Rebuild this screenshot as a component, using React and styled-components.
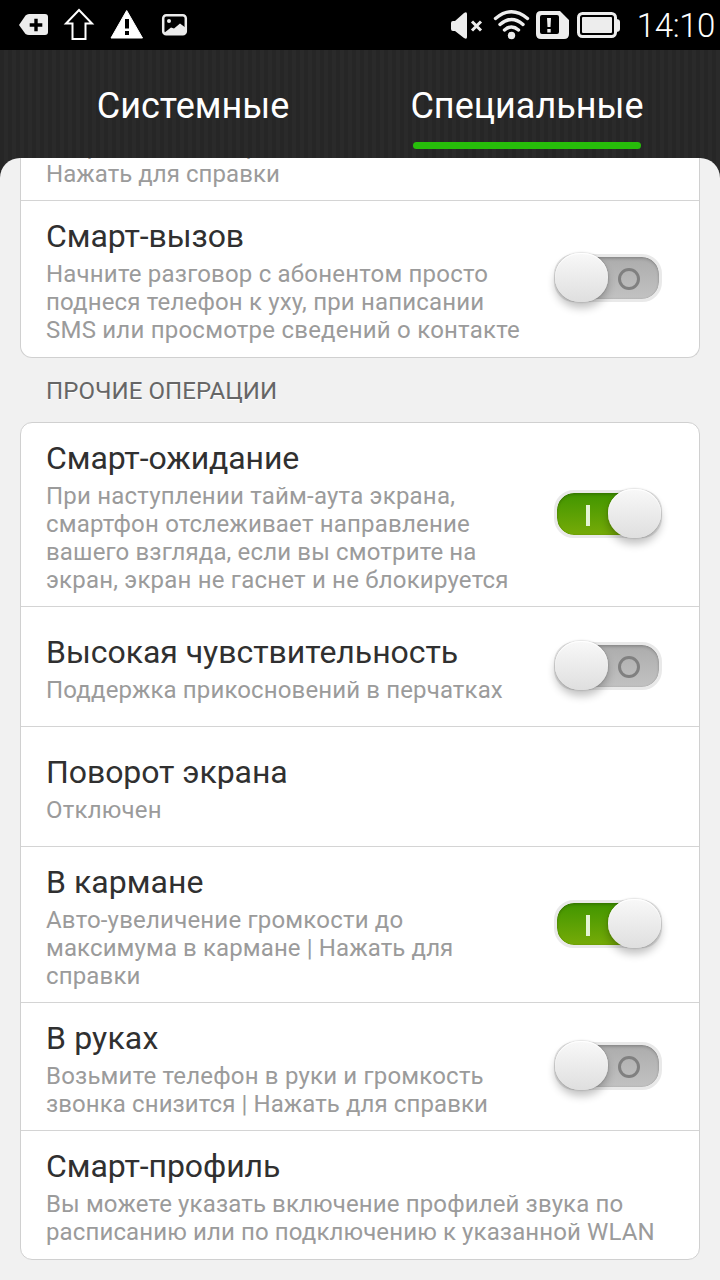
import React from "react";
import styled, { createGlobalStyle } from "styled-components";

const Global = createGlobalStyle`
  * { box-sizing: border-box; }
  body { margin: 0; background: #262626; font-family: Roboto, "Noto Sans", sans-serif; }
`;

const Screen = styled.div`
  width: 720px;
  height: 1280px;
  display: flex;
  flex-direction: column;
  overflow: hidden;
  background: #262626 repeating-linear-gradient(90deg, #262626 0 4px, #2a2a2a 4px 8px);
`;

const StatusBar = styled.header`
  flex: none;
  height: 50px;
  padding: 0 5px 0 18px;
  display: flex;
  align-items: center;
  justify-content: space-between;
  background: #000;
`;

const StatusGroup = styled.div`
  display: flex;
  align-items: center;
  height: 50px;
`;

const Icon = styled.svg`
  display: block;
  flex: none;
`;

const Clock = styled.time`
  margin-left: 16px;
  padding-top: 2px;
  color: #fff;
  font-size: 33px;
  font-weight: 300;
  line-height: 50px;
  letter-spacing: ${(p) => p.$track}px;
`;

const Tabs = styled.nav`
  flex: none;
  height: 108px;
  padding: 0 34px;
  display: flex;
  justify-content: space-between;
`;

const Tab = styled.div`
  width: 318px;
  display: flex;
  flex-direction: column;
  align-items: center;
  color: #fff;
`;

const TabLabel = styled.span`
  margin-top: 34px;
  font-size: 36px;
  line-height: 44px;
  white-space: nowrap;
`;

const Underline = styled.div`
  width: 228px;
  height: 7px;
  margin-top: 14px;
  border-radius: 4px;
  background: #27bd0a;
`;

const Content = styled.main`
  flex: 1;
  min-height: 0;
  padding: 0 20px;
  overflow: hidden;
  border-radius: 20px 20px 0 0;
  background: #f1f1f1;
`;

const Card = styled.section`
  width: 680px;
  border: 1px solid #d0d0d0;
  border-top-width: ${(p) => (p.$cut ? 0 : 1)}px;
  border-radius: ${(p) => (p.$cut ? "0 0 12px 12px" : "12px")};
  background: #fff;
`;

const RowBox = styled.article`
  height: ${(p) => p.$height}px;
  padding: ${(p) => p.$top}px 37px 0 25px;
  display: flex;
  align-items: ${(p) => (p.$scrolled ? "flex-end" : "flex-start")};
  justify-content: space-between;
  overflow: hidden;
  & + & { border-top: 1px solid #d4d4d4; }
`;

const RowText = styled.div`
  padding-bottom: ${(p) => (p.$scrolled ? 12 : 0)}px;
`;

const Title = styled.h2`
  margin: 0 0 5px;
  color: #303030;
  font-size: 32px;
  font-weight: 400;
  line-height: 38px;
  white-space: nowrap;
  letter-spacing: ${(p) => p.$track}px;
`;

const Line = styled.div`
  color: #9b9b9b;
  font-size: 24px;
  line-height: 28px;
  white-space: nowrap;
  letter-spacing: ${(p) => p.$track}px;
`;

const SectionTitle = styled.h3`
  margin: 0;
  height: 64px;
  padding: 1px 26px 0;
  color: #666;
  font-size: 24px;
  font-weight: 400;
  line-height: 64px;
  letter-spacing: 0.07px;
  text-shadow: 0 1px 0 #fff;
`;

const Track = styled.div`
  width: 108px;
  height: 48px;
  flex: none;
  margin-top: ${(p) => p.$top}px;
  display: flex;
  align-items: center;
  flex-direction: ${(p) => (p.$on ? "row-reverse" : "row")};
  border: 3px solid #e9e9e9;
  border-radius: 20px;
  background: ${(p) => (p.$on ? "linear-gradient(#419600, #76ab08)" : "linear-gradient(#acacac, #c2c2c2)")};
  background-clip: padding-box;
  box-shadow: inset 0 2px 3px rgba(0, 0, 0, 0.16), inset 0 0 2px rgba(0, 0, 0, 0.16);
`;

const Knob = styled.div`
  width: 53px;
  height: 49px;
  flex: none;
  margin: -4px -2px -3px;
  border-radius: 25px / 24px;
  background: linear-gradient(#f8f8f8, #dfdfdf);
  box-shadow: 0 6px 9px rgba(0, 0, 0, 0.24), 0 0 2px rgba(0, 0, 0, 0.3), inset 0 1px 1px #fff;
`;

const Mark = styled.div`
  flex: 1;
  display: flex;
  justify-content: center;
  padding: ${(p) => (p.$on ? "2px 0 0 8px" : "2px 7px 0 0")};
`;

const Ring = styled.i`
  width: 22px;
  height: 22px;
  border: 3px solid #808080;
  border-radius: 50%;
`;

const Bar = styled.i`
  width: 4px;
  height: 21px;
  background: #e4f4d4;
`;

function Toggle({ on, top }) {
  return (
    <Track $on={on} $top={top}>
      <Knob />
      <Mark $on={on}>{on ? <Bar /> : <Ring />}</Mark>
    </Track>
  );
}

function Row({ height, top = 0, title, track = 0, lines, toggle, toggleTop, scrolled }) {
  return (
    <RowBox $height={height} $top={top} $scrolled={scrolled}>
      <RowText $scrolled={scrolled}>
        {title && <Title $track={track}>{title}</Title>}
        {lines.map(([text, spacing = 0]) => (
          <Line key={text} $track={spacing}>{text}</Line>
        ))}
      </RowText>
      {toggle && <Toggle on={toggle === "on"} top={toggleTop} />}
    </RowBox>
  );
}

function NoticeIcons() {
  return (
    <Icon width="172" height="50" viewBox="18 0 172 50">
      <path d="M19 25 25.500 15.500Q27 14 29 14H45Q48 14 48 17V32Q48 35 45 35H29Q27 35 25.500 34Z" fill="#ededed" />
      <path d="M36 18.700V31.300M29.700 25H42.300" stroke="#000" strokeWidth="3.400" />
      <path d="M79 10 92 23.500H85.500V39H72.500V23.500H66Z" fill="none" stroke="#fff" strokeWidth="2" />
      <path d="M126.700 10.500 142.500 38H111Z" fill="#fff" stroke="#fff" strokeLinejoin="round" />
      <path d="M125 19H129V28.500H125ZM125 31H129V35H125Z" fill="#000" />
      <rect x="163.200" y="15.200" width="22.600" height="19" rx="3" fill="none" stroke="#ececec" strokeWidth="2.500" />
      <circle cx="169" cy="21" r="2" fill="#ececec" />
      <path d="M164 33 171 27.500 174 28.500 180 23.500 186 28V34H164Z" fill="#ececec" />
    </Icon>
  );
}

function SystemIcons() {
  return (
    <Icon width="172" height="50" viewBox="449 0 172 50">
      <g fill="#ededed">
        <path d="M451 23Q451 21 453 21H455L464 13Q467 11 467 14V37Q467 40 464 38L455 31H453Q451 31 451 29Z" />
        <circle cx="511.500" cy="35.500" r="3.700" />
        <path fillRule="evenodd" d="M541 11H560L569 20V34Q569 39 564 39H541Q536 39 536 34V16Q536 11 541 11ZM542 15Q540 15 540 17V32Q540 34 542 34H557Q559 34 559 32V17Q559 15 557 15Z" />
        <path d="M547 18H551L550.500 27H547.500ZM547.300 29H550.700V32.500H547.300Z" />
        <rect x="582" y="17" width="30" height="16" rx="1" />
        <path d="M616 19Q620 19 620 22V29Q620 32 616 32Z" />
      </g>
      <g fill="none" stroke="#ededed">
        <path d="M472 21.500 481 30.500M481 21.500 472 30.500" strokeWidth="3" />
        <path d="M495.500 18.500Q511.500 5 527.500 18.500M500 24.500Q511.500 14.500 523 24.500M504.500 30Q511.500 24 518.500 30" strokeWidth="3.400" strokeLinecap="round" />
        <rect x="578.500" y="13.500" width="37" height="23" rx="4" strokeWidth="3" />
      </g>
    </Icon>
  );
}

export default function App() {
  return (
    <Screen>
      <Global />
      <StatusBar>
        <StatusGroup><NoticeIcons /></StatusGroup>
        <StatusGroup>
          <SystemIcons />
          <Clock $track={-0.4}>14:10</Clock>
        </StatusGroup>
      </StatusBar>
      <Tabs>
        <Tab><TabLabel>Системные</TabLabel></Tab>
        <Tab><TabLabel>Специальные</TabLabel><Underline /></Tab>
      </Tabs>
      <Content>
        <Card $cut>
          <Row height={42} scrolled lines={[["вибрация звонка растет |"], ["Нажать для справки", 0.05]]} />
          <Row height={157} top={16} title="Смарт-вызов" track={-0.07} toggle="off" toggleTop={37}
            lines={[["Начните разговор с абонентом просто", 0.2], ["поднеся телефон к уху, при написании", 0.17], ["SMS или просмотре сведений о контакте", 0.22]]} />
        </Card>
        <SectionTitle>ПРОЧИЕ ОПЕРАЦИИ</SectionTitle>
        <Card>
          <Row height={183} top={16} title="Смарт-ожидание" track={-0.09} toggle="on" toggleTop={51}
            lines={[["При наступлении тайм-аута экрана,", 0.21], ["смартфон отслеживает направление", 0.19], ["вашего взгляда, если вы смотрите на", 0.15], ["экран, экран не гаснет и не блокируется", 0.2]]} />
          <Row height={120} top={26} title="Высокая чувствительность" track={-0.03} toggle="off" toggleTop={9}
            lines={[["Поддержка прикосновений в перчатках", 0.13]]} />
          <Row height={120} top={26} title="Поворот экрана" track={-0.07} lines={[["Отключен", 0.2]]} />
          <Row height={156} top={16} title="В кармане" track={0.05} toggle="on" toggleTop={37}
            lines={[["Авто-увеличение громкости до", 0.2], ["максимума в кармане | Нажать для", 0.11], ["справки", 0.15]]} />
          <Row height={128} top={16} title="В руках" track={0.15} toggle="off" toggleTop={23}
            lines={[["Возьмите телефон в руки и громкость", 0.19], ["звонка снизится | Нажать для справки", 0.09]]} />
          <Row height={129} top={16} title="Смарт-профиль" track={-0.07}
            lines={[["Вы можете указать включение профилей звука по", 0.13], ["расписанию или по подключению к указанной WLAN", 0.12]]} />
        </Card>
      </Content>
    </Screen>
  );
}
